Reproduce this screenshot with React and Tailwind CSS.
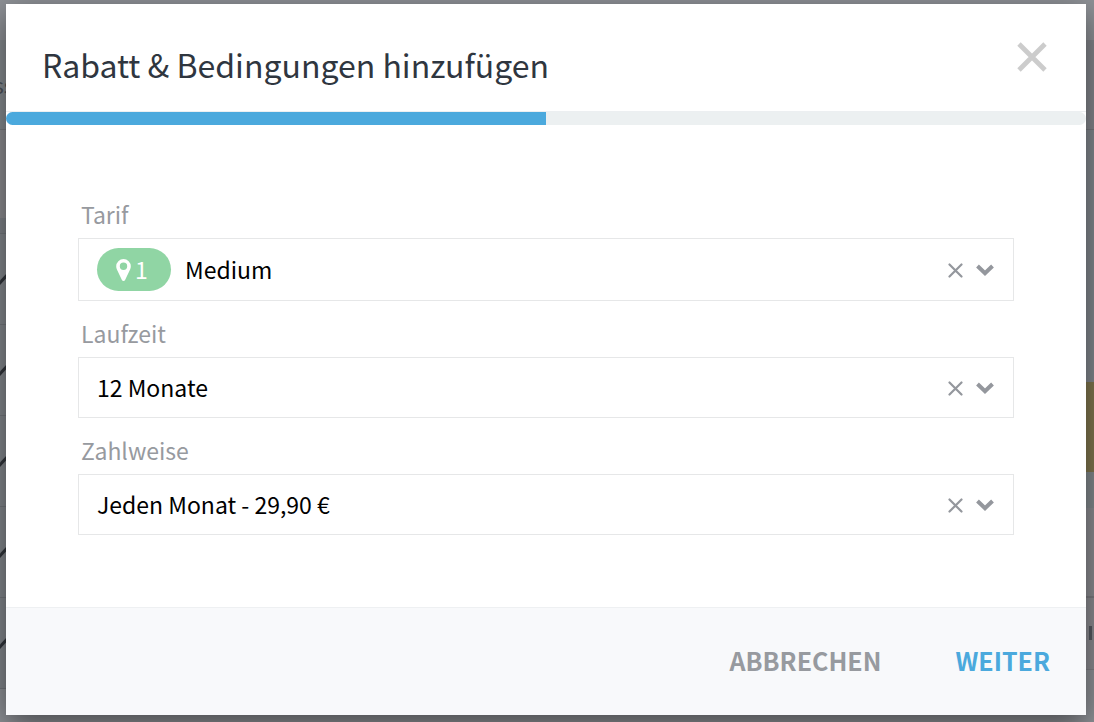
import { useState } from 'react';

const FIELDS = [
  { id: 'tarif', label: 'Tarif', value: 'Medium', badge: '1' },
  { id: 'laufzeit', label: 'Laufzeit', value: '12 Monate' },
  { id: 'zahlweise', label: 'Zahlweise', value: 'Jeden Monat - 29,90 €' },
];

function PinIcon() {
  return (
    <svg width="15" height="22" viewBox="0 0 15 22" fill="currentColor" aria-hidden="true">
      <path
        fillRule="evenodd"
        d="M7.500 0A7.300 7.300 0 0 0 .2 7.300c0 1.200.2 2 .6 2.900l5.100 10.700c.3.600.9 1 1.600 1s1.300-.4 1.600-1l5.100-10.700c.4-.9.600-1.700.600-2.900A7.300 7.300 0 0 0 7.500 0Zm0 11a3.700 3.700 0 1 1 0-7.400 3.700 3.700 0 0 1 0 7.400Z"
      />
    </svg>
  );
}

function CrossIcon() {
  return (
    <svg width="15" height="15" viewBox="0 0 15 15" fill="none" stroke="currentColor" strokeWidth="2.200" strokeLinecap="round" aria-hidden="true">
      <path d="M1.500 1.500l12 12M13.500 1.500l-12 12" />
    </svg>
  );
}

function ChevronIcon() {
  return (
    <svg width="18" height="12" viewBox="0 0 18 12" fill="none" stroke="currentColor" strokeWidth="4" strokeLinejoin="miter" aria-hidden="true">
      <path d="M1.500 2L9 9.200 16.500 2" />
    </svg>
  );
}

function SelectField({ id, label, badge, value: initial }) {
  const [value, setValue] = useState(initial);

  return (
    <div>
      <label htmlFor={id} className="block pl-[3px] mb-2.5 text-[23px] leading-7 text-[#979a9f]">
        {label}
      </label>
      <div className="flex items-center border border-[#e6e7e8] py-[9px] pl-[18px] pr-[19px]">
        {badge && (
          <span className="flex items-center justify-center gap-1 w-[74px] h-[43px] mr-3.5 pr-1 rounded-full bg-[#90d5a4] text-white text-[23px]">
            <PinIcon />
            {badge}
          </span>
        )}
        <div className="relative flex flex-1 items-center text-[#94979d]">
          <select
            id={id}
            value={value}
            onChange={(e) => setValue(e.target.value)}
            className="w-full h-[41px] appearance-none bg-transparent text-[23px] text-black outline-none"
          >
            <option value={initial}>{initial}</option>
            <option value="" />
          </select>
          <div className="absolute right-0 flex items-center gap-[13px] pt-px pointer-events-none">
            <button
              type="button"
              aria-label={`${label} leeren`}
              onClick={() => setValue('')}
              className="pointer-events-auto cursor-pointer"
            >
              <CrossIcon />
            </button>
            <ChevronIcon />
          </div>
        </div>
      </div>
    </div>
  );
}

// Dimmed page behind the dialog, only its edges stay visible
function Backdrop() {
  return (
    <div aria-hidden="true" className="absolute inset-0 -z-10 flex justify-between overflow-hidden bg-[#8f9297]">
      <div className="w-20 pt-10">
        <div className="h-[90px] bg-[#868b8f] border-b border-[#787c80] overflow-hidden">
          <div className="w-3.5 pt-[30px] flex justify-end text-[22px] leading-7 text-[#4d525a]">ss</div>
        </div>
        <div className="h-22 bg-[#8c8c90]" />
        <div className="h-4 bg-[#7f8388] border-b border-[#74787d]" />
        {[0, 1, 2, 3, 4].map((i) => (
          <div key={i} className="h-[91px] bg-[#83878c] border-b border-[#74787d]">
            <svg width="12" height="90" viewBox="0 0 12 90" fill="none" stroke="#30343a" strokeWidth="3">
              <path d="M-2 51L10 38" />
            </svg>
          </div>
        ))}
      </div>
      <div className="w-20 pt-10">
        <div className="h-[90px] bg-[#84868c] border-b border-[#75787d]" />
        <div className="h-[252px] bg-[#83888e]" />
        <div className="h-[90px] bg-[#81774f]" />
        <div className="h-9 bg-[#83898d]" />
        <div className="h-[90px] bg-[#8c8c91] border-b-2 border-[#7b7b80]" />
        <div className="h-18 bg-[#8c8c91] border-b border-[#808085] flex justify-end pt-7 pr-0.5">
          <span className="w-[3px] h-3.5 bg-[#555960]" />
        </div>
      </div>
    </div>
  );
}

export default function App() {
  return (
    <div className="relative z-0 min-h-screen overflow-hidden pt-1 pb-[7px] pl-1.5 pr-2 font-['Noto_Sans_CJK_SC','Noto_Sans',sans-serif]">
      <Backdrop />
      <div role="dialog" aria-labelledby="dialog-title" className="bg-white shadow-[0_10px_30px_rgba(0,0,0,0.5)]">
        <header className="flex items-start justify-between pl-9 pr-[39px] pt-[38px] pb-[25px] border-b border-[#eceff1]">
          <h1 id="dialog-title" className="text-[32px] leading-11 text-[#2f363f]">
            Rabatt &amp; Bedingungen hinzufügen
          </h1>
          <button type="button" aria-label="Schließen" className="cursor-pointer text-[#cccccc]">
            <svg width="30" height="30" viewBox="0 0 30 30" fill="none" stroke="currentColor" strokeWidth="4.800" aria-hidden="true">
              <path d="M2 2l26 26M28 2L2 28" />
            </svg>
          </button>
        </header>

        <div
          role="progressbar"
          aria-label="Fortschritt"
          aria-valuenow={50}
          aria-valuemin={0}
          aria-valuemax={100}
          className="h-[13px] rounded-full bg-[#ecf0f1] overflow-hidden"
        >
          <div className="h-full w-1/2 bg-[#4ba9dd]" />
        </div>

        <form className="flex flex-col gap-[18px] px-18 pt-[75px] pb-18">
          {FIELDS.map((field) => (
            <SelectField key={field.id} {...field} />
          ))}
        </form>

        <footer className="flex items-center justify-end gap-[74px] px-9 pt-[31px] pb-[33px] border-t border-[#eef0f2] bg-[#f8f9fb] text-[25px] leading-[43px] font-bold">
          <button type="button" className="cursor-pointer text-[#979a9f]">ABBRECHEN</button>
          <button type="button" className="cursor-pointer text-[#4ba9dd]">WEITER</button>
        </footer>
      </div>
    </div>
  );
}
